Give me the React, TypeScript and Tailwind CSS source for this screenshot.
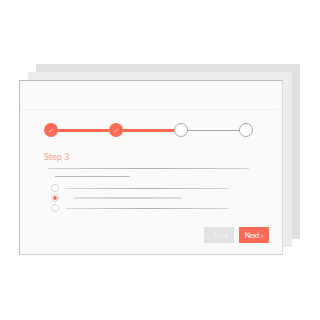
import React from 'react'

const ORANGE = 'bg-[#fd6b55]'

function Check() {
  return (
    <svg width="6" height="5" viewBox="0 0 6 5" fill="none">
      <path d="M0.8 2.6 L2.3 4 L5.2 1" stroke="#ffd3cb" strokeWidth="0.8" />
    </svg>
  )
}

function Done() {
  return (
    <div className={`w-[14px] h-[14px] rounded-full ${ORANGE} flex items-center justify-center shrink-0`}>
      <Check />
    </div>
  )
}

function Todo() {
  return <div className="w-[14px] h-[14px] rounded-full bg-white border border-[#a9a9a9] shrink-0" />
}

function Radio({ on }: { on?: boolean }) {
  return (
    <div className="w-[8px] h-[8px] rounded-full border border-[#d6d6d6] bg-white flex items-center justify-center shrink-0">
      {on && <div className={`w-[4px] h-[4px] rounded-full ${ORANGE}`} />}
    </div>
  )
}

export default function App() {
  return (
    <div className="w-[320px] h-[320px] bg-white font-['Lato',sans-serif] relative">
      {/* stacked cards behind */}
      <div className="absolute left-[36px] top-[64px] w-[264px] h-[175px] bg-[#e0e0e0]" />
      <div className="absolute left-[28px] top-[72px] w-[264px] h-[175px] bg-[#ebebeb]" />

      <div className="absolute left-[19px] top-[80px] w-[264px] h-[175px] bg-[#fafafa] border border-[#bcbcbc] border-r-[#dcdcdc] border-b-[#d4d4d4] flex flex-col">
        <div className="h-[29px] mx-[3px] border-b border-[#efefef] shrink-0" />

        {/* stepper */}
        <div className="flex items-center pl-[24px] mt-[13px]">
          <Done />
          <div className={`w-[51px] h-[3px] ${ORANGE}`} />
          <Done />
          <div className={`w-[51px] h-[3px] ${ORANGE}`} />
          <Todo />
          <div className="w-[51px] h-px bg-[#a8a8a8]" />
          <Todo />
        </div>

        <div className="pl-[24px] mt-[14px] text-[9px] leading-[12px] text-[#f8a28f]">Step 3</div>

        <div className="ml-[28px] mt-[5px] w-[201px] h-px bg-gradient-to-r from-[#d4d4d4] via-[#a9acae] to-[#d4d4d4]" />
        <div className="ml-[35px] mt-[7px] w-[75px] h-px bg-[#b4b6b8]" />

        <div className="flex flex-col gap-[2px] mt-[7px] pl-[31px]">
          <div className="flex items-center h-[8px]">
            <Radio />
            <div className="ml-[6px] w-[164px] h-px bg-gradient-to-r from-[#dadada] via-[#abaeb0] to-[#d8d8d8]" />
          </div>
          <div className="flex items-center h-[8px]">
            <Radio on />
            <div className="ml-[15px] w-[107px] h-[2px] bg-gradient-to-r from-[#e4e4e4] via-[#cfcfcf] to-[#e0e0e0]" />
          </div>
          <div className="flex items-center h-[8px]">
            <Radio />
            <div className="ml-[7px] w-[163px] h-px bg-gradient-to-r from-[#dadada] via-[#abaeb0] to-[#d8d8d8]" />
          </div>
        </div>

        <div className="flex-1" />
        <div className="flex justify-end gap-[5px] pr-[13px] pb-[11px]">
          <div className="w-[30px] h-[16px] bg-[#e2e2e2] text-[#f4f4f4] text-[7px] flex items-center justify-center">‹ Back</div>
          <div className={`w-[30px] h-[16px] ${ORANGE} text-white text-[7px] flex items-center justify-center`}>Next ›</div>
        </div>
      </div>
    </div>
  )
}
